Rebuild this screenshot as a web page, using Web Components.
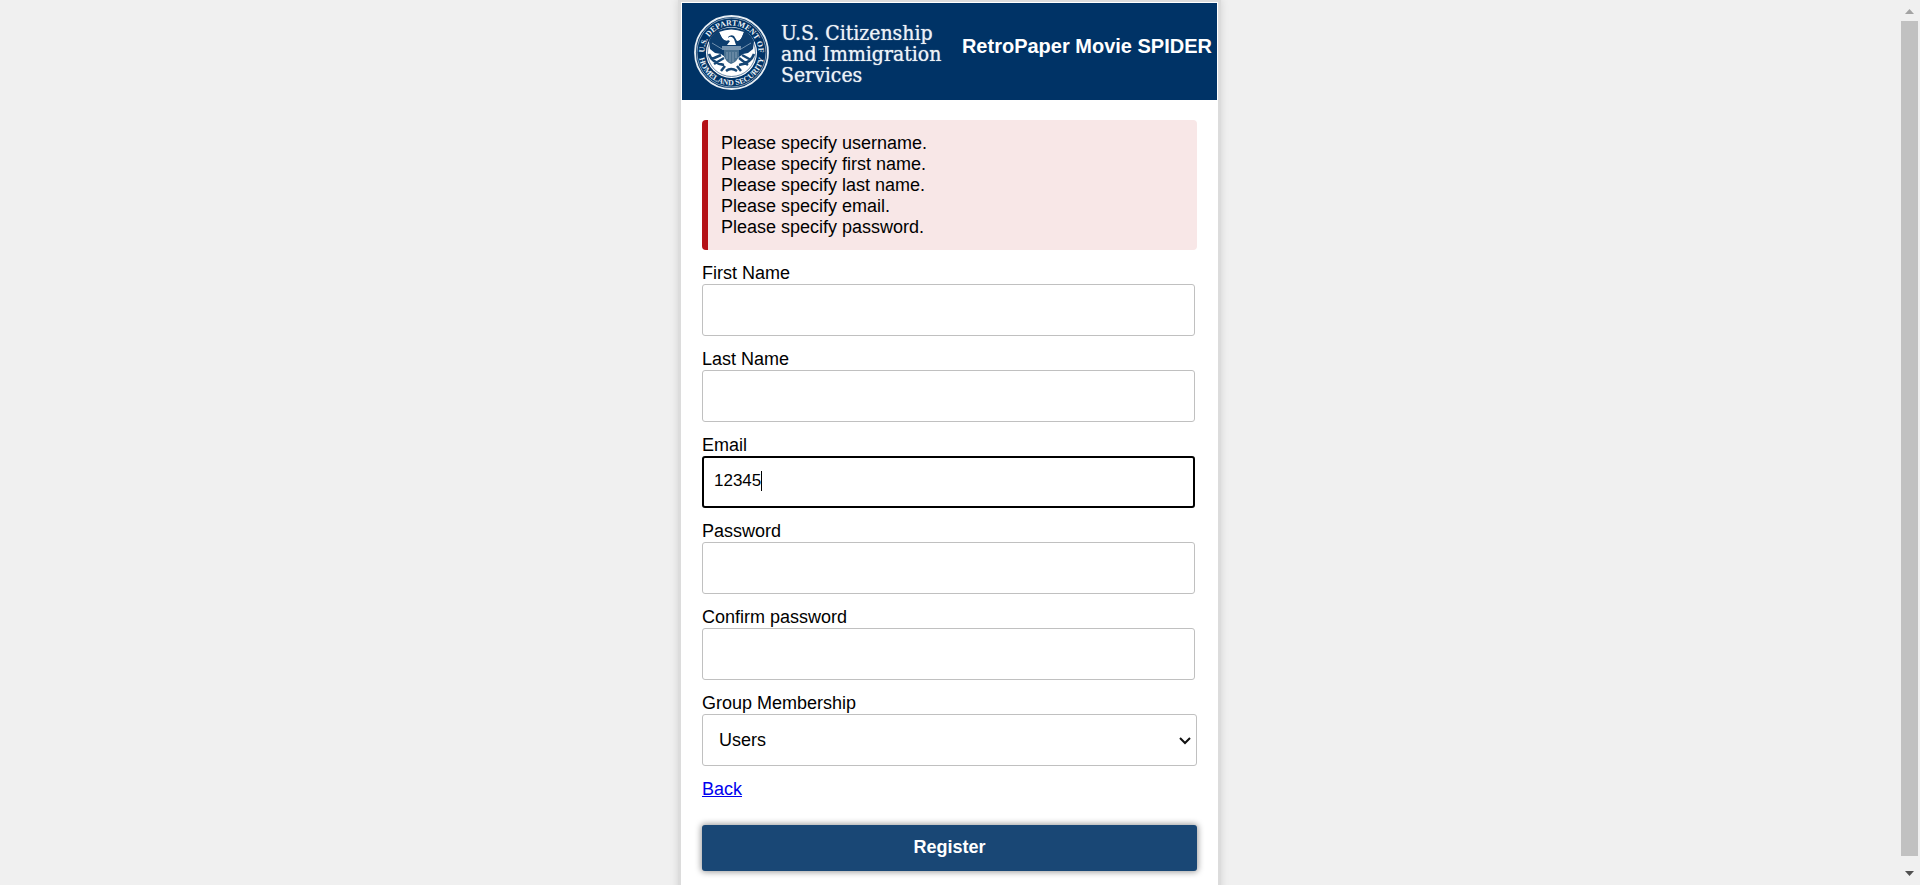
<!DOCTYPE html>
<html lang="en">
<head>
<meta charset="utf-8">
<title>RetroPaper Movie SPIDER</title>
<style>
  html, body { margin: 0; height: 100%; }
  body { background: #f0f0f0; color: #000; font: 18px/21px "Liberation Sans", Arial, sans-serif; }
</style>
</head>
<body>
<app-window>
  <page-card>
    <site-header slot="header" heading="RetroPaper Movie SPIDER"></site-header>
    <error-list>
      <div>Please specify username.</div>
      <div>Please specify first name.</div>
      <div>Please specify last name.</div>
      <div>Please specify email.</div>
      <div>Please specify password.</div>
    </error-list>
    <text-field label="First Name"></text-field>
    <text-field label="Last Name"></text-field>
    <text-field label="Email" value="12345" active></text-field>
    <text-field label="Password" type="password"></text-field>
    <text-field label="Confirm password" type="password"></text-field>
    <select-field label="Group Membership" options="Users"></select-field>
    <back-link href="#back">Back</back-link>
    <submit-button>Register</submit-button>
  </page-card>
</app-window>

<script>
const define = (name, html, setup) => {
  const template = document.createElement('template');
  template.innerHTML = html;
  customElements.define(name, class extends HTMLElement {
    constructor() {
      super();
      this.attachShadow({ mode: 'open' }).append(template.content.cloneNode(true));
    }
    connectedCallback() { if (setup) setup(this, this.shadowRoot); }
  });
};

define('app-window', `
  <style>
    :host { display: flex; height: 100vh; }
    main { flex: 1; min-width: 0; overflow-y: auto; scrollbar-width: none; padding: 2px 12px 12px; box-sizing: border-box; }
  </style>
  <main><slot></slot></main>
  <scroll-rail></scroll-rail>`);

define('scroll-rail', `
  <style>
    :host { display: flex; flex-direction: column; align-items: center; box-sizing: border-box; width: 21px; padding: 0 2px; background: #f0f0f0; }
    svg { display: block; width: 17px; height: 21px; flex: none; }
    svg.down { height: 29px; }
    .thumb { flex: 1; align-self: stretch; background: #c1c1c1; }
  </style>
  <svg viewBox="0 0 17 21"><path d="M4 14h9L8.500 9z" fill="#a3a3a3"/></svg>
  <div class="thumb"></div>
  <svg class="down" viewBox="0 0 17 29"><path d="M4 15h9L8.500 20z" fill="#505050"/></svg>`);

define('page-card', `
  <style>
    :host { display: block; max-width: 537px; margin: 0 auto; background: #fff; box-shadow: 0 0 0 3px #dcdcdc, 0 0 8px 3px rgba(0,0,0,.12); }
    .head { padding: 1px 1px 0; }
    form { display: flex; flex-direction: column; gap: 13px; padding: 20px 21px 36px; }
  </style>
  <div class="head"><slot name="header"></slot></div>
  <form><slot></slot></form>`);

define('site-header', `
  <style>
    :host { display: flex; align-items: flex-start; box-sizing: border-box; height: 97px; padding: 12px 5px 0 12px; background: #003366; color: #fff; }
    .name { margin: 8px 0 0 12px; flex: none; color: #edf2f6; text-shadow: 0 0 1px #b9c8d6; font: 21px/21px "DejaVu Serif Condensed", "DejaVu Serif", serif; }
    h1 { flex: 1; margin: 19px 0 0; text-align: right; white-space: nowrap; font-size: 20px; line-height: 24px; }
  </style>
  <agency-seal></agency-seal>
  <div class="name">U.S. Citizenship<br>and Immigration<br>Services</div>
  <h1></h1>`,
  (el, root) => { root.querySelector('h1').textContent = el.getAttribute('heading'); });

define('agency-seal', `
  <style>
    :host { display: block; flex: none; width: 75px; height: 75px; }
    svg { display: block; width: 75px; height: 75px; }
    text { font: bold 8px "Liberation Serif", serif; fill: #e9f0f6; }
  </style>
  <svg viewBox="0 0 75 75" aria-hidden="true">
    <defs>
      <path id="upper" d="M13.600 50A27 27 0 1 1 61.400 50"/>
      <path id="lower" d="M5.100 31A33 33 0 1 0 69.900 31"/>
    </defs>
    <circle cx="37.500" cy="37.500" r="36.500" fill="#003366" stroke="#e7eef4" stroke-width="1.800"/>
    <circle cx="37.500" cy="37.500" r="34.500" fill="none" stroke="#b6c7d6" stroke-width=".7"/>
    <circle cx="37.500" cy="37.500" r="25.500" fill="#fff"/>
    <text text-anchor="middle"><textPath href="#upper" startOffset="50%">U.S. DEPARTMENT OF</textPath></text>
    <text text-anchor="middle"><textPath href="#lower" startOffset="50%">HOMELAND SECURITY</textPath></text>
    <circle cx="37.500" cy="37.500" r="24" fill="none" stroke="#003366" stroke-width=".6"/>
    <path fill="#0d3e6f" d="M15 26C17 21 20 18 23 16Q37 9 52 16Q57 20 60 26L59 34L54 38L49 39L45 42L38 47L31 42L27 39L21 38L16 34Z"/>
    <path fill="#fff" d="M25 17Q37 12 50 17L48 22Q46 26 43 26L40 21Q37 19 34 22L35 25Q31 27 28 23Z"/>
    <path fill="#fff" d="M34 23Q37 20 40 24L42 30H33L36 26L33 25Z"/>
    <path fill="#0d3e6f" d="M25 17L28 23Q31 28 35 25L33 29L27 28L22 20ZM50 17L48 22Q46 27 42 27L43 30L49 28L53 20Z"/>
    <path fill="#7895b0" d="M28 31H47V35H28Z"/>
    <path fill="#49708f" d="M30 35H45V41Q44 46 37 49Q31 46 30 41Z"/>
    <path stroke="#9db3c7" stroke-width=".7" d="M33 37V44M36 37V47M39 37V47M42 37V43M18 28L28 34M57 28L47 34" fill="none"/>
    <path stroke="#174775" stroke-width="2.500" fill="none" d="M15 39Q18 48 30 50M18 44L27 40M20 49L30 43M60 39Q57 48 45 50M48 40L57 45M45 43L54 50M31 51L27 56M43 51L47 56M32 56Q37 52 43 56"/>
  </svg>`);

define('error-list', `
  <style>
    :host { display: block; padding: 13px 13px 12px; border-left: 6px solid #b51217; border-radius: 4px; background: #f8e7e7; }
  </style>
  <slot></slot>`);

define('text-field', `
  <style>
    :host { display: block; }
    label { display: block; }
    .box { position: relative; margin-right: 2px; }
    input { display: block; box-sizing: border-box; width: 100%; height: 52px; padding: 0 11px 2px; border: 1px solid #c0c0c0; border-radius: 3px; outline: none; background: #fff; color: #000; font: 17px/21px "Liberation Sans", Arial, sans-serif; }
    .caret { display: none; }
    :host([active]) input { border: 2px solid #000; padding: 0 10px 2px; }
    :host([active]) .caret { display: block; position: absolute; left: calc(12px + 5ch); top: 15px; width: 1px; height: 20px; background: #000; font-size: 17px; }
  </style>
  <label for="field"></label>
  <div class="box"><input id="field"><span class="caret"></span></div>`,
  (el, root) => {
    const input = root.querySelector('input');
    root.querySelector('label').textContent = el.getAttribute('label');
    input.type = el.getAttribute('type') || 'text';
    input.value = el.getAttribute('value') || '';
  });

define('select-field', `
  <style>
    :host { display: block; }
    label { display: block; }
    .box { position: relative; }
    select { appearance: none; display: block; box-sizing: border-box; width: 100%; height: 52px; padding: 0 32px 0 16px; border: 1px solid #c0c0c0; border-radius: 3px; background: #fff; color: #000; font: 18px/21px "Liberation Sans", Arial, sans-serif; }
    svg { position: absolute; right: 6px; top: 20px; width: 12px; height: 12px; pointer-events: none; }
  </style>
  <label for="choice"></label>
  <div class="box">
    <select id="choice"></select>
    <svg viewBox="0 0 12 12"><path d="M1 4L6 9L11 4" fill="none" stroke="#111" stroke-width="2"/></svg>
  </div>`,
  (el, root) => {
    root.querySelector('label').textContent = el.getAttribute('label');
    root.querySelector('select').replaceChildren(...el.getAttribute('options').split(',').map(o => new Option(o)));
  });

define('back-link', `
  <style>
    :host { display: block; }
    a { color: #0000ee; text-decoration: underline; }
  </style>
  <a><slot></slot></a>`,
  (el, root) => { root.querySelector('a').href = el.getAttribute('href'); });

define('submit-button', `
  <style>
    :host { display: block; margin-top: 12px; }
    button { display: block; width: 100%; height: 46px; padding: 0 0 2px; border: 0; border-radius: 3px; background: #194775; color: #fff; box-shadow: 0 0 6px 1px rgba(0,0,0,.4); font: bold 18px/21px "Liberation Sans", Arial, sans-serif; }
  </style>
  <button type="button"><slot></slot></button>`);
</script>
</body>
</html>
